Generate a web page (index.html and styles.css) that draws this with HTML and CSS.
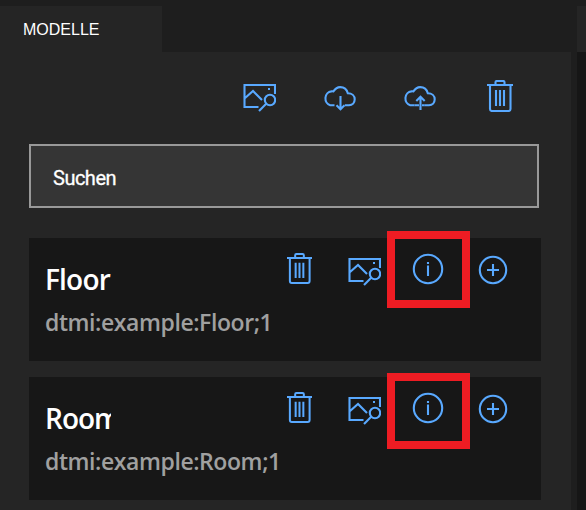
FILE: index.html
```html
<!DOCTYPE html>
<html lang="de">
<head>
<meta charset="utf-8">
<title>Modelle</title>
<link rel="stylesheet" href="styles.css">
</head>
<body>
<svg class="symbols" width="0" height="0" aria-hidden="true">
  <symbol id="image-search" viewBox="0 0 33 28">
    <path d="M15.5 23H1.5V1H32V10M1.5 14.5L10 7L19 16"/>
    <circle cx="27" cy="16" r="5.2"/>
    <path d="M23.2 19.8L16 27"/>
    <path class="solid" d="M25 4h2v2h-2z"/>
  </symbol>
  <symbol id="cloud" viewBox="0 0 33 25">
    <path d="M11.5 19.2H7.2A6.2 7 0 0 1 8.3 5.4Q9.3 5.2 10.4 5.4C12.2 2.6 14.3 1.1 17.2 1.1C21.2 1.1 23.8 3.4 24.8 7.2C29 7.2 31.7 9.8 31.7 13.3C31.7 16.8 29.4 19.2 26 19.2H21.8"/>
  </symbol>
  <symbol id="trash" viewBox="0 0 26 32">
    <path d="M0 5H26M8.5 5V2.2Q8.5 1 9.7 1H16.3Q17.5 1 17.5 2.2V5M3 5V29Q3 31 5 31H21.5Q23.5 31 23.5 29V5M9 10V26M13 10V26M17 10V26"/>
  </symbol>
</svg>
<div class="window">
  <main class="explorer">
    <div class="tabs"><div class="tab">MODELLE</div></div>
    <section class="panel">
      <div class="toolbar">
        <svg class="icon picture"><use href="#image-search"/></svg>
        <svg class="icon cloud" viewBox="0 0 33 25"><use href="#cloud" width="33" height="25"/><path d="M17.5 10V23.5M13.5 19.2L17.5 23.2L21.5 19.2"/></svg>
        <svg class="icon cloud" viewBox="0 0 33 25"><use href="#cloud" width="33" height="25"/><path d="M17.5 24V10.8M13.3 15L17.5 10.8L21.7 15M16 19.2H11.5M19 19.2H21.8"/></svg>
        <svg class="icon trash"><use href="#trash"/></svg>
      </div>
      <input class="search" type="text" value="Suchen" aria-label="Suchen">
      <article class="card">
        <div class="text"><h2 class="floor">Floor</h2><p>dtmi:example:Floor;1</p></div>
        <div class="actions">
          <svg class="icon trash small"><use href="#trash"/></svg>
          <svg class="icon picture"><use href="#image-search"/></svg>
          <svg class="icon info" viewBox="0 0 31 31"><circle cx="16" cy="15" r="14.2"/><path d="M16 11.5V22M16 8V10"/></svg>
          <svg class="icon plus" viewBox="0 0 29 29"><circle cx="15" cy="14" r="13.2"/><path d="M9 14H21M15 8V20"/></svg>
        </div>
        <div class="highlight first"></div>
      </article>
      <article class="card">
        <div class="text"><h2 class="room">Room</h2><p>dtmi:example:Room;1</p></div>
        <div class="actions">
          <svg class="icon trash small"><use href="#trash"/></svg>
          <svg class="icon picture"><use href="#image-search"/></svg>
          <svg class="icon info" viewBox="0 0 31 31"><circle cx="16" cy="15" r="14.2"/><path d="M16 11.5V22M16 8V10"/></svg>
          <svg class="icon plus" viewBox="0 0 29 29"><circle cx="15" cy="14" r="13.2"/><path d="M9 14H21M15 8V20"/></svg>
        </div>
        <div class="highlight second"></div>
      </article>
    </section>
  </main>
  <aside class="neighbor"><div class="neighbor-tab"></div></aside>
</div>
</body>
</html>
```
FILE: styles.css
```css
* { box-sizing: border-box; }
body { margin: 0; background: #1e1e1e; color: #fff; overflow: hidden; }
.symbols { position: absolute; }
.window { display: flex; gap: 6px; width: 586px; height: 510px; padding-top: 6px; }
.explorer { width: 571px; }
.tabs { height: 46px; }
.tab {
  width: 162px; height: 46px; padding-left: 23px; background: #252525;
  font: 16px/47px "Liberation Sans", Arial, sans-serif;
}
.panel { height: 458px; padding: 28px 30px 0 29px; background: #252525; }
.toolbar { display: flex; align-items: flex-start; height: 64px; padding-left: 214px; }
.icon { display: block; flex: none; fill: none; stroke: #59a9ff; stroke-width: 2.1; overflow: visible; }
.solid { fill: #59a9ff; stroke: none; }
.picture { width: 33px; height: 28px; }
.cloud { width: 33px; height: 25px; }
.trash { width: 26px; height: 32px; }
.trash.small { width: 25px; height: 31px; }
.info { width: 31px; height: 31px; }
.plus { width: 29px; height: 29px; }
.toolbar .picture { margin-top: 4px; }
.toolbar .cloud { margin: 6px 0 0 47px; }
.toolbar .trash { margin-left: 51px; }
.search {
  display: block; width: 510px; height: 64px; margin: 0 0 30px; padding: 3px 0 0 22px;
  border: 2px solid #999; border-radius: 0; outline: 0; background: #353535; color: #fff;
  font: 20px Roboto, sans-serif; letter-spacing: -0.5px; -webkit-text-stroke: 0.3px #fff;
}
.card { position: relative; display: flex; width: 512px; height: 123px; margin-bottom: 16px; background: #171717; }
.text { width: 258px; padding: 23px 0 0 16px; font-family: "Open Sans", "Segoe UI", sans-serif; white-space: nowrap; }
h2 { width: 66px; height: 36px; margin: 0; overflow: hidden; font-size: 28px; line-height: 36px; font-weight: 600; }
.floor { letter-spacing: -0.8px; }
.room { letter-spacing: -1px; }
p { margin: 8px 0 0; color: #a0a0a0; font-size: 23px; line-height: 34px; font-weight: 600; letter-spacing: -0.42px; }
.actions { display: flex; align-items: flex-start; padding-top: 15px; }
.actions .picture { margin: 5px 0 0 36px; }
.actions .info { margin: 1px 0 0 31px; }
.actions .plus { margin: 3px 0 0 35px; }
.highlight { position: absolute; left: 358px; width: 83px; border: 8px solid #ee1c23; }
.first { top: -7px; height: 77px; }
.second { top: -4px; height: 76px; }
.neighbor { width: 9px; height: 504px; background: #161616; }
.neighbor-tab { height: 46px; background: #252525; }
```
